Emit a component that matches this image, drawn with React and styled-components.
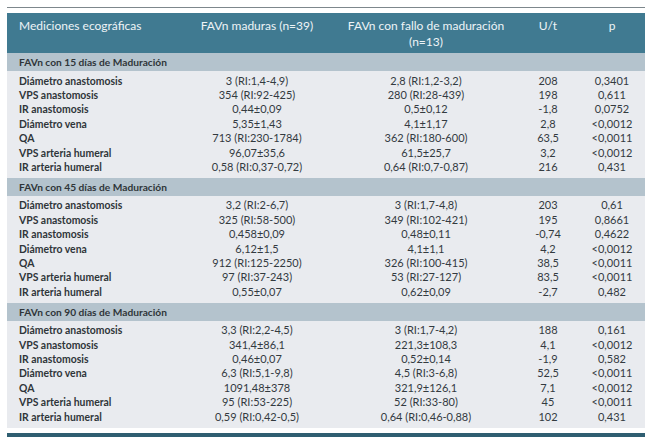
import React from "react";
import styled, { createGlobalStyle } from "styled-components";

const sections = [
  {
    title: "FAVn con 15 días de Maduración",
    rows: [
      ["Diámetro anastomosis", "3 (RI:1,4-4,9)", "2,8 (RI:1,2-3,2)", "208", "0,3401"],
      ["VPS anastomosis", "354 (RI:92-425)", "280 (RI:28-439)", "198", "0,611"],
      ["IR anastomosis", "0,44±0,09", "0,5±0,12", "-1,8", "0,0752"],
      ["Diámetro vena", "5,35±1,43", "4,1±1,17", "2,8", "<0,0012"],
      ["QA", "713 (RI:230-1784)", "362 (RI:180-600)", "63,5", "<0,0011"],
      ["VPS arteria humeral", "96,07±35,6", "61,5±25,7", "3,2", "<0,0012"],
      ["IR arteria humeral", "0,58 (RI:0,37-0,72)", "0,64 (RI:0,7-0,87)", "216", "0,431"],
    ],
  },
  {
    title: "FAVn con 45 días de Maduración",
    rows: [
      ["Diámetro anastomosis", "3,2 (RI:2-6,7)", "3 (RI:1,7-4,8)", "203", "0,61"],
      ["VPS anastomosis", "325 (RI:58-500)", "349 (RI:102-421)", "195", "0,8661"],
      ["IR anastomosis", "0,458±0,09", "0,48±0,11", "-0,74", "0,4622"],
      ["Diámetro vena", "6,12±1,5", "4,1±1,1", "4,2", "<0,0012"],
      ["QA", "912 (RI:125-2250)", "326 (RI:100-415)", "38,5", "<0,0011"],
      ["VPS arteria humeral", "97 (RI:37-243)", "53 (RI:27-127)", "83,5", "<0,0011"],
      ["IR arteria humeral", "0,55±0,07", "0,62±0,09", "-2,7", "0,482"],
    ],
  },
  {
    title: "FAVn con 90 días de Maduración",
    rows: [
      ["Diámetro anastomosis", "3,3 (RI:2,2-4,5)", "3 (RI:1,7-4,2)", "188", "0,161"],
      ["VPS anastomosis", "341,4±86,1", "221,3±108,3", "4,1", "<0,0012"],
      ["IR anastomosis", "0,46±0,07", "0,52±0,14", "-1,9", "0,582"],
      ["Diámetro vena", "6,3 (RI:5,1-9,8)", "4,5 (RI:3-6,8)", "52,5", "<0,0011"],
      ["QA", "1091,48±378", "321,9±126,1", "7,1", "<0,0012"],
      ["VPS arteria humeral", "95 (RI:53-225)", "52 (RI:33-80)", "45", "<0,0011"],
      ["IR arteria humeral", "0,59 (RI:0,42-0,5)", "0,64 (RI:0,46-0,88)", "102", "0,431"],
    ],
  },
];

function App() {
  return (
    <>
      <GlobalStyle />
      <Wrapper>
        <TopRule />
        <HeaderRow>
          <HeadCell $left>Mediciones ecográficas</HeadCell>
          <HeadCell>FAVn maduras (n=39)</HeadCell>
          <HeadCell>
            FAVn con fallo de maduración
            <br />
            (n=13)
          </HeadCell>
          <HeadCell>U/t</HeadCell>
          <HeadCell>p</HeadCell>
        </HeaderRow>

        {sections.map((section) => (
          <div key={section.title}>
            <SectionTitle>{section.title}</SectionTitle>
            <SectionBody>
              {section.rows.map((row) => (
                <Row key={row[0]}>
                  <Label>{row[0]}</Label>
                  {row.slice(1).map((value, i) => (
                    <Value key={i}>{value}</Value>
                  ))}
                </Row>
              ))}
            </SectionBody>
          </div>
        ))}

        <BottomBar />
      </Wrapper>
    </>
  );
}

export default App;

const GlobalStyle = createGlobalStyle`
  body {
    margin: 0;
    background: #ffffff;
    font-family: Lato, "Open Sans", sans-serif;
    color: #333a3f;
  }
`;

const columns = "172px 156px 182px 62px 66px";

const Wrapper = styled.div`
  width: 638px;
  padding: 7px 5px 0 7px;
`;

const TopRule = styled.div`
  height: 1px;
  background: #7d878c;
  margin-bottom: 5px;
`;

const HeaderRow = styled.div`
  display: grid;
  grid-template-columns: ${columns};
  align-items: start;
  height: 40px;
  box-sizing: border-box;
  padding-top: 5px;
  background: #407a91;
  color: #eef4f7;
  font-size: 12px;
  line-height: 16px;
`;

const HeadCell = styled.div`
  text-align: ${(props) => (props.$left ? "left" : "center")};
  padding-left: ${(props) => (props.$left ? "12px" : "0")};
  white-space: nowrap;
`;

const SectionTitle = styled.div`
  height: 18px;
  line-height: 18px;
  padding-left: 12px;
  background: #b4c3cd;
  font-size: 10.2px;
  font-weight: 700;
  color: #2f3539;
`;

const SectionBody = styled.div`
  background: #e9ebef;
  padding: 2.5px 0 3.5px;
`;

const Row = styled.div`
  display: grid;
  grid-template-columns: ${columns};
  line-height: 14.4px;
  font-size: 11px;
`;

const Label = styled.div`
  padding-left: 12px;
  font-size: 10.4px;
  font-weight: 700;
  white-space: nowrap;
  color: #2f3539;
`;

const Value = styled.div`
  text-align: center;
  white-space: nowrap;
`;

const BottomBar = styled.div`
  height: 4px;
  margin-top: 5px;
  background: #2f5e71;
`;
